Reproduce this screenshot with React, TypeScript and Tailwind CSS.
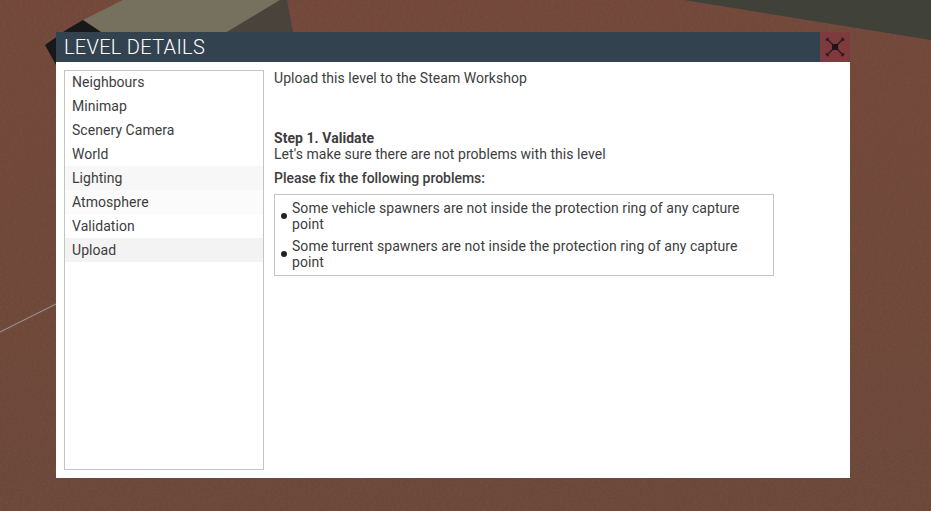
const menu = [
  { label: "Neighbours", bg: "" },
  { label: "Minimap", bg: "" },
  { label: "Scenery Camera", bg: "" },
  { label: "World", bg: "" },
  { label: "Lighting", bg: "bg-[#f7f7f7]" },
  { label: "Atmosphere", bg: "bg-[#fbfbfb]" },
  { label: "Validation", bg: "" },
  { label: "Upload", bg: "bg-[#f3f3f3]" },
];

const problems = [
  "Some vehicle spawners are not inside the protection ring of any capture point",
  "Some turrent spawners are not inside the protection ring of any capture point",
];

function Scene() {
  return (
    <svg className="absolute inset-0 h-full w-full" viewBox="0 0 931 511" aria-hidden="true">
      <defs>
        <linearGradient id="ground" x1="0" y1="0" x2="0" y2="1">
          <stop offset="0" stopColor="#73483a" />
          <stop offset="0.6" stopColor="#70483a" />
          <stop offset="1" stopColor="#6c483a" />
        </linearGradient>
        <filter id="grain" x="0" y="0" width="100%" height="100%">
          <feTurbulence type="fractalNoise" baseFrequency="0.35 0.5" numOctaves="2" seed="4" />
          <feColorMatrix values="0 0 0 0 0.2  0 0 0 0 0.12  0 0 0 0 0.08  0 0 0 1.4 -0.55" />
        </filter>
      </defs>
      <rect width="931" height="511" fill="url(#ground)" />
      <rect width="931" height="511" filter="url(#grain)" opacity="0.35" />
      <polygon points="684,0 931,40 931,0" fill="#40423a" />
      <polygon points="83,20 123,0 280,0 227,32 101,32" fill="#76705f" />
      <polygon points="227,32 280,0 287,0 293,32" fill="#4a433c" />
      <polygon points="45,45 55,38 66,30 83,20 101,32 56,32 56,65" fill="#17181a" />
      <line x1="0" y1="332" x2="56" y2="304" stroke="#a09d99" strokeWidth="1" />
    </svg>
  );
}

export default function App() {
  return (
    <div className="relative h-[511px] w-[931px] overflow-hidden font-['Roboto',sans-serif] text-[14px] leading-4 tracking-[0.05px] text-[#3d3d3d]">
      <Scene />
      <div className="relative pl-[56px] pt-[32px]">
        <div className="flex h-[446px] w-[794px] flex-col">
          <div className="flex h-[30px] items-center justify-between bg-[#33424f]">
            <h1 className="pl-2 text-[20px] font-light leading-[30px] tracking-[0.3px] text-white">LEVEL DETAILS</h1>
            <button className="flex h-[30px] w-[30px] items-center justify-center bg-[#7f3a3d]">
              <svg viewBox="0 0 24 24" className="h-6 w-6 blur-[0.5px]" aria-hidden="true">
                <path d="M4 4 L20 20 M20 4 L4 20" stroke="#2a1c1e" strokeWidth="1.4" fill="none" />
                <rect x="9" y="9" width="6" height="6" fill="#1d1618" />
                <path d="M3 5.5 L5.5 3 M18.5 3 L21 5.5 M3 18.5 L5.5 21 M18.5 21 L21 18.5" stroke="#2a1c1e" strokeWidth="2" fill="none" />
              </svg>
            </button>
          </div>
          <div className="flex flex-1 gap-[10px] bg-white p-2">
            <div className="w-[200px] border border-[#c4c4c4]">
              <ul className="-mt-px">
                {menu.map((item) => (
                  <li key={item.label} className={`h-6 pl-[7px] leading-6 ${item.bg}`}>
                    {item.label}
                  </li>
                ))}
              </ul>
            </div>
            <div className="flex-1">
              <p>Upload this level to the Steam Workshop</p>
              <h2 className="mt-[44px] font-bold">Step 1. Validate</h2>
              <p>Let's make sure there are not problems with this level</p>
              <p className="mt-[8px] font-medium tracking-[-0.03px]">Please fix the following problems:</p>
              <ul className="mt-2 w-[500px] border border-[#c4c4c4] py-[5px] pl-[6px] pr-4">
                {problems.map((text) => (
                  <li key={text} className="mb-[6px] flex items-center gap-[5px] last:mb-0">
                    <span className="h-[6px] w-[6px] shrink-0 rounded-full bg-[#222222]" />
                    <span>{text}</span>
                  </li>
                ))}
              </ul>
            </div>
          </div>
        </div>
      </div>
    </div>
  );
}
